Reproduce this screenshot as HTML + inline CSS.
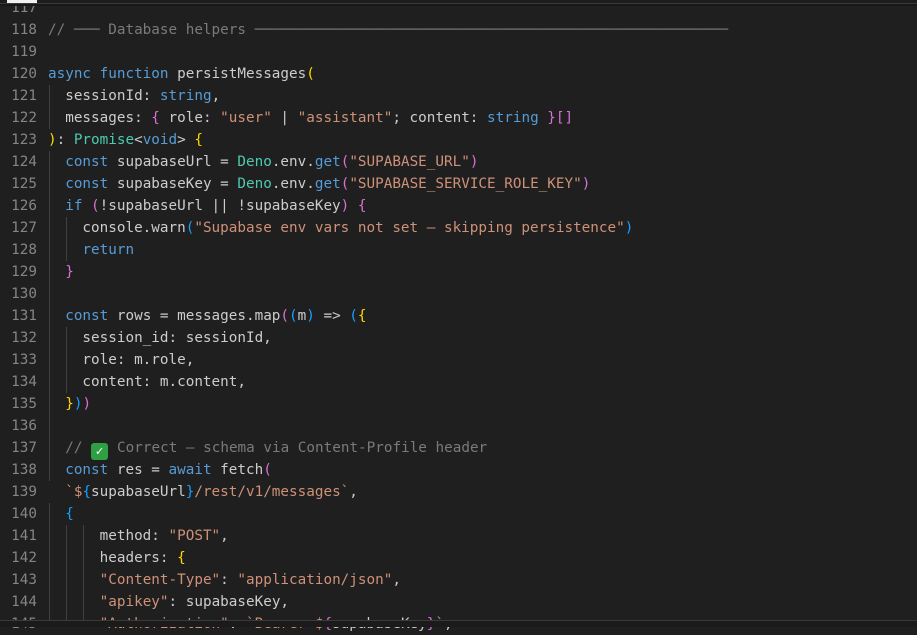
<!DOCTYPE html>
<html><head><meta charset="utf-8"><style>
html,body{margin:0;padding:0;background:#1f1f1f;width:917px;height:626px;overflow:hidden}
.top{position:absolute;left:0;top:0;width:917px;height:3px;background:#1c1c1c}
.tl{position:absolute;left:0;top:3px;width:917px;height:1px;background:#3a3a3a}
.sh{position:absolute;left:0;top:4px;width:917px;height:2px;background:#181818}
.tab{position:absolute;left:7px;top:0;width:30px;height:3px;background:#f0f0f0}
.bot{position:absolute;left:0;top:620px;width:917px;height:6px;background:#1b1b1b;border-top:1px solid #3a3a3a}
.code{position:absolute;left:0;top:-3px;font-family:"DejaVu Sans Mono","Liberation Mono",monospace;font-size:14.3px;color:#cccccc}
.l{height:22px;line-height:22px;white-space:pre;position:relative}
.n{display:inline-block;width:37px;text-align:right;color:#858585;margin-right:11px}
.k{color:#569cd6}.s{color:#ce9178}.t{color:#4ec9b0}.c{color:#7a7a7a}
.y{color:#ffd700}.p{color:#da70d6}.b{color:#179fff}
.g{position:absolute;width:1px;background:#404040}
.ok{display:inline-block;width:17px;height:17px;background:#2ea043;border-radius:3px;color:#fff;font-size:13px;line-height:17px;text-align:center;vertical-align:-3px;margin-right:9px}
</style></head><body>
<div class="g" style="left:49px;top:85px;height:44px"></div>
<div class="g" style="left:49px;top:151px;height:330px"></div>
<div class="g" style="left:49px;top:503px;height:124px"></div>
<div class="g" style="left:66px;top:217px;height:44px"></div>
<div class="g" style="left:66px;top:327px;height:66px"></div>
<div class="g" style="left:66px;top:525px;height:102px"></div>
<div class="g" style="left:83px;top:525px;height:102px"></div>
<div class="code">
<div class="l"><span class="n">117</span></div>
<div class="l"><span class="n">118</span><span class="c">// ─── Database helpers ───────────────────────────────────────────────────────</span></div>
<div class="l"><span class="n">119</span></div>
<div class="l"><span class="n">120</span><span class="k">async function</span> persistMessages<span class="y">(</span></div>
<div class="l"><span class="n">121</span>  sessionId: <span class="k">string</span>,</div>
<div class="l"><span class="n">122</span>  messages: <span class="p">{</span> role: <span class="s">"user"</span> | <span class="s">"assistant"</span>; content: <span class="k">string</span> <span class="p">}[]</span></div>
<div class="l"><span class="n">123</span><span class="y">)</span>: <span class="t">Promise</span>&lt;<span class="k">void</span>&gt; <span class="y">{</span></div>
<div class="l"><span class="n">124</span>  <span class="k">const</span> supabaseUrl = <span class="t">Deno</span>.env.<span class="k">get</span><span class="p">(</span><span class="s">"SUPABASE_URL"</span><span class="p">)</span></div>
<div class="l"><span class="n">125</span>  <span class="k">const</span> supabaseKey = <span class="t">Deno</span>.env.<span class="k">get</span><span class="p">(</span><span class="s">"SUPABASE_SERVICE_ROLE_KEY"</span><span class="p">)</span></div>
<div class="l"><span class="n">126</span>  <span class="k">if</span> <span class="p">(</span>!supabaseUrl || !supabaseKey<span class="p">)</span> <span class="p">{</span></div>
<div class="l"><span class="n">127</span>    console.warn<span class="b">(</span><span class="s">"Supabase env vars not set — skipping persistence"</span><span class="b">)</span></div>
<div class="l"><span class="n">128</span>    <span class="k">return</span></div>
<div class="l"><span class="n">129</span>  <span class="p">}</span></div>
<div class="l"><span class="n">130</span></div>
<div class="l"><span class="n">131</span>  <span class="k">const</span> rows = messages.map<span class="p">(</span><span class="b">(</span>m<span class="b">)</span> =&gt; <span class="b">(</span><span class="y">{</span></div>
<div class="l"><span class="n">132</span>    session_id: sessionId,</div>
<div class="l"><span class="n">133</span>    role: m.role,</div>
<div class="l"><span class="n">134</span>    content: m.content,</div>
<div class="l"><span class="n">135</span>  <span class="y">}</span><span class="b">)</span><span class="p">)</span></div>
<div class="l"><span class="n">136</span></div>
<div class="l"><span class="n">137</span>  <span class="c">// <span class="ok">✓</span>Correct — schema via Content-Profile header</span></div>
<div class="l"><span class="n">138</span>  <span class="k">const</span> res = <span class="k">await</span> fetch<span class="p">(</span></div>
<div class="l"><span class="n">139</span>  <span class="s">`$</span><span class="b">{</span>supabaseUrl<span class="b">}</span><span class="s">/rest/v1/messages`</span>,</div>
<div class="l"><span class="n">140</span>  <span class="b">{</span></div>
<div class="l"><span class="n">141</span>      method: <span class="s">"POST"</span>,</div>
<div class="l"><span class="n">142</span>      headers: <span class="y">{</span></div>
<div class="l"><span class="n">143</span>      <span class="s">"Content-Type"</span>: <span class="s">"application/json"</span>,</div>
<div class="l"><span class="n">144</span>      <span class="s">"apikey"</span>: supabaseKey,</div>
<div class="l"><span class="n">145</span>      <span class="s">"Authorization"</span>: <span class="s">`Bearer $</span><span class="p">{</span>supabaseKey<span class="p">}</span><span class="s">`</span>,</div>
</div>
<div class="top"></div><div class="tl"></div><div class="sh"></div><div class="tab"></div>
<div class="bot"></div>
</body></html>
